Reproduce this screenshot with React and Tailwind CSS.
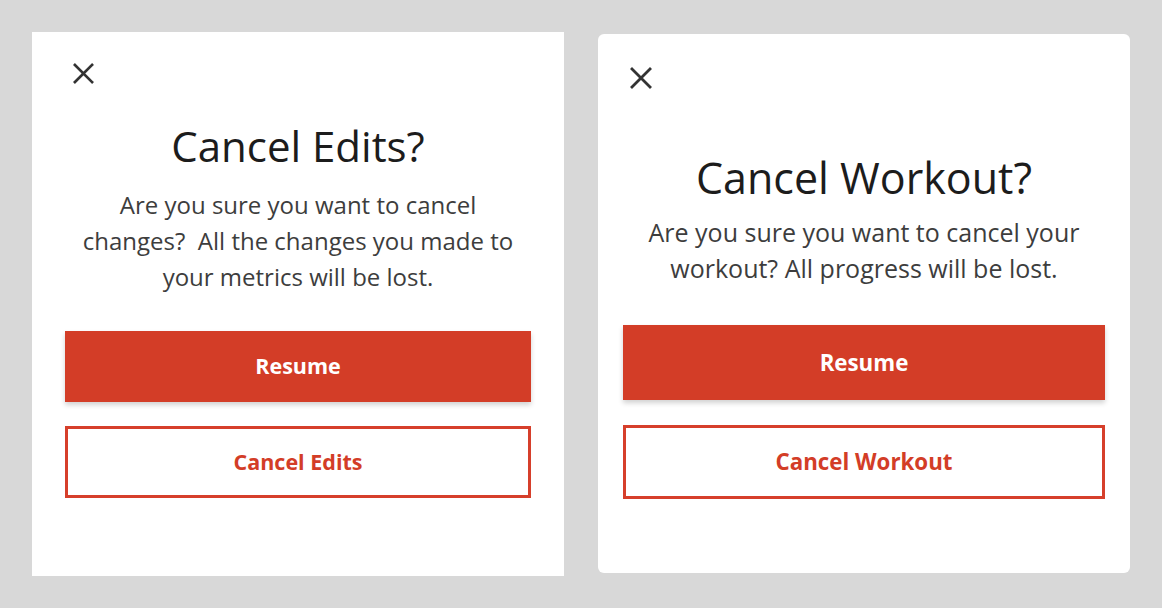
const CloseIcon = ({ size }) => (
  <svg width={size} height={size} viewBox="0 0 22 22" fill="none">
    <path d="M2 2L20 20M20 2L2 20" stroke="#333333" strokeWidth="2.8" strokeLinecap="square" />
  </svg>
);

const Dialog = ({ className, pad, iconSize, iconPad, title, titleSize, titleGap, body, bodySize, bodyGap, btnGap, cancelGap, btnH, cancelH, btnText, cancelLabel }) => (
  <div className={`bg-white flex flex-col ${className}`}>
    <div className={iconPad}>
      <CloseIcon size={iconSize} />
    </div>
    <h2 className={`text-center leading-[48px] text-[#1c1c1c] font-normal ${titleSize} ${titleGap}`}>{title}</h2>
    <p className={`text-center leading-[36px] text-[#3d3d3d] ${bodySize} ${bodyGap}`}>{body}</p>
    <div className={`flex flex-col ${pad}`}>
      <button className={`w-full ${btnH} ${btnGap} ${btnText} bg-[#d33d27] text-white font-bold shadow-[0_3px_5px_rgba(0,0,0,0.18)]`}>
        Resume
      </button>
      <button className={`w-full ${cancelH} ${cancelGap} ${btnText} border-[3px] border-[#d63f2b] bg-white text-[#d33d27] font-bold`}>
        {cancelLabel}
      </button>
    </div>
  </div>
);

export default function App() {
  return (
    <div className="w-[1162px] h-[608px] bg-[#d8d8d8] flex items-start gap-[34px] pl-[32px]" style={{ fontFamily: '"Open Sans", sans-serif' }}>
      <Dialog
        className="w-[532px] h-[544px] mt-[32px]"
        pad="px-[33px]"
        iconSize={21}
        iconPad="pt-[31px] pl-[41px]"
        title="Cancel Edits?"
        titleSize="text-[42px]"
        titleGap="mt-[38px]"
        body={<>Are you sure you want to cancel<br />changes?&nbsp; All the changes you made to<br />your metrics will be lost.</>}
        bodySize="text-[24px]"
        bodyGap="mt-[17px]"
        btnGap="mt-[36px]"
        cancelGap="mt-[24px]"
        btnH="h-[71px]"
        cancelH="h-[72px]"
        btnText="text-[21.5px]"
        cancelLabel="Cancel Edits"
      />
      <Dialog
        className="w-[532px] h-[539px] mt-[34px] rounded-[6px]"
        pad="px-[25px]"
        iconSize={22}
        iconPad="pt-[33px] pl-[32px]"
        title="Cancel Workout?"
        titleSize="text-[43px]"
        titleGap="mt-[65px]"
        body={<>Are you sure you want to cancel your<br />workout? All progress will be lost.</>}
        bodySize="text-[25px]"
        bodyGap="mt-[12px]"
        btnGap="mt-[39px]"
        cancelGap="mt-[25px]"
        btnH="h-[75px]"
        cancelH="h-[74px]"
        btnText="text-[22.3px]"
        cancelLabel="Cancel Workout"
      />
    </div>
  );
}
